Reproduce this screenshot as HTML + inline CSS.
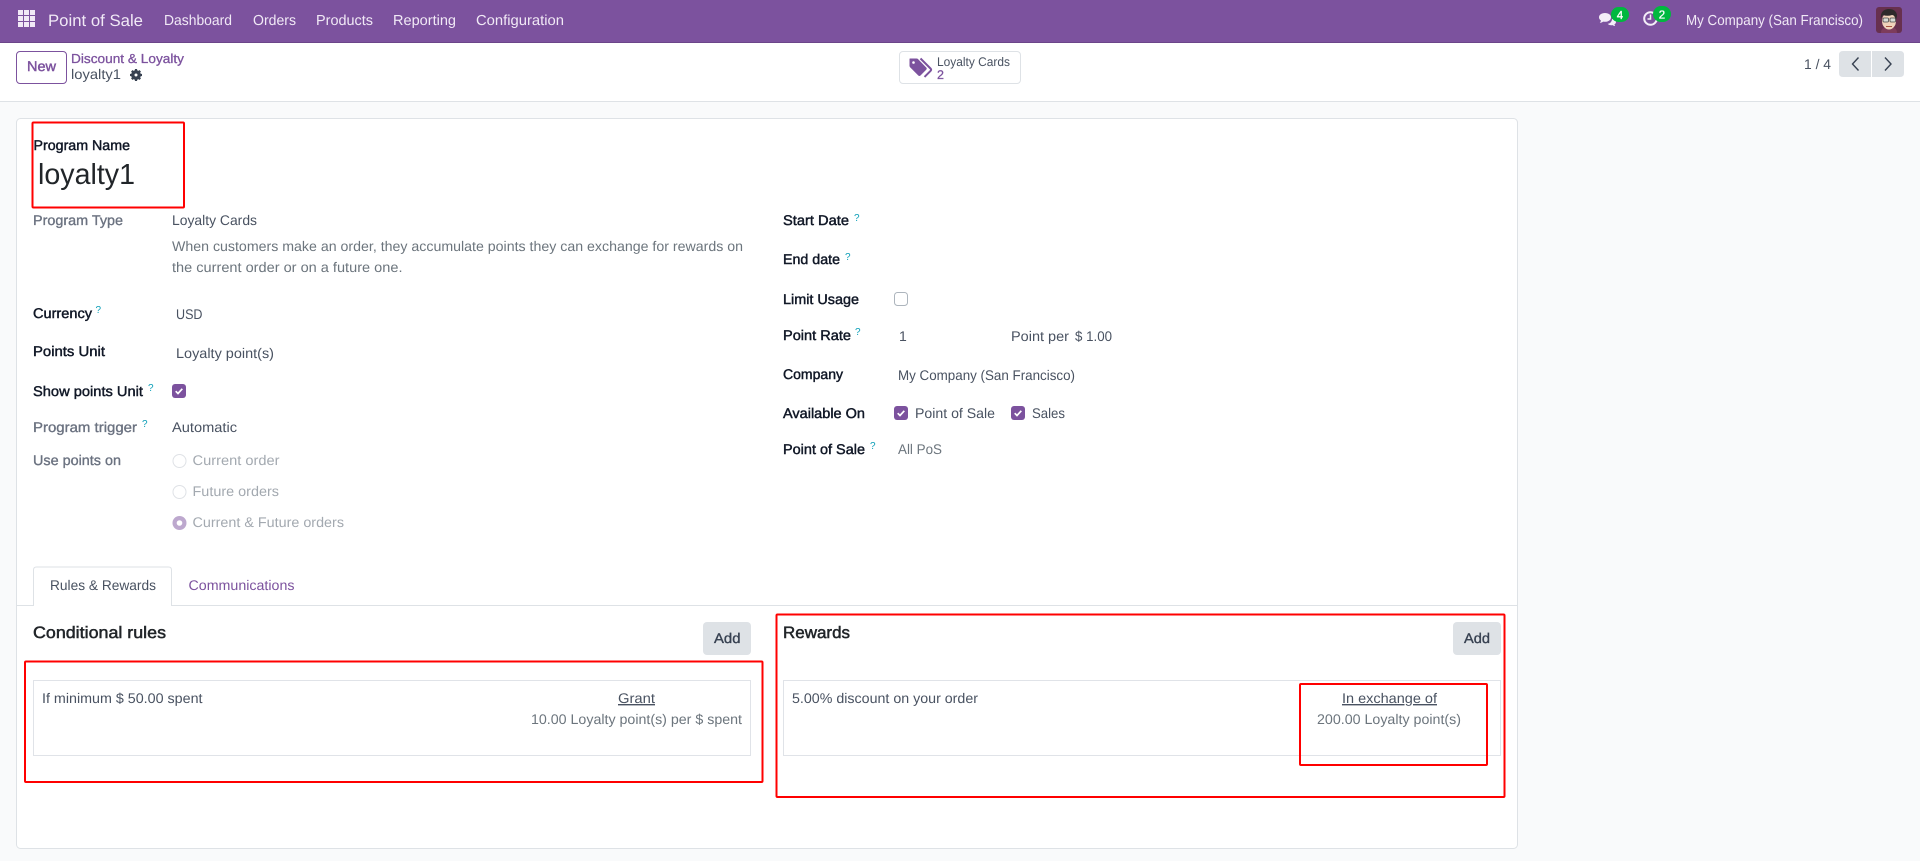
<!DOCTYPE html>
<html lang="en">
<head>
<meta charset="utf-8">
<title>Point of Sale - loyalty1</title>
<style>
html,body{margin:0;padding:0;width:1920px;height:861px;overflow:hidden;background:#f9fafb}
svg{display:block}
text{font-family:"Liberation Sans",sans-serif;font-size:14px;fill:#4b5563;text-rendering:geometricPrecision}
.nav{fill:#f1e9f6;font-size:14.5px}
.dk{fill:#495261}
.gr{fill:#6c757d}
.lb{fill:#111827;stroke:#111827;stroke-width:.45px}
.lg{fill:#6b7280;stroke:#6b7280;stroke-width:.35px}
.pu{fill:#7c529e}
.dis{fill:#a3a9b0}
.q{fill:#0d9fb8;font-size:10px}
.u{text-decoration:underline}
.h{fill:#212529;stroke:#212529;stroke-width:.5px;font-size:16.5px}
.red{fill:none;stroke:#f00;stroke-width:2}
</style>
</head>
<body>
<svg width="1920" height="861" viewBox="0 0 1920 861" xmlns="http://www.w3.org/2000/svg">
<!-- navbar -->
<rect width="1920" height="43" fill="#7c529e"/>
<rect y="42" width="1920" height="1" fill="#6b4589"/>
<g fill="#f1e9f6">
<rect x="18" y="10" width="5" height="5"/><rect x="24" y="10" width="5" height="5"/><rect x="30" y="10" width="5" height="5"/>
<rect x="18" y="16" width="5" height="5"/><rect x="24" y="16" width="5" height="5"/><rect x="30" y="16" width="5" height="5"/>
<rect x="18" y="22" width="5" height="5"/><rect x="24" y="22" width="5" height="5"/><rect x="30" y="22" width="5" height="5"/>
</g>
<text class="nav" x="48" y="26" textLength="95" lengthAdjust="spacingAndGlyphs" style="font-size:16.5px">Point of Sale</text>
<text class="nav" x="164" y="25" textLength="68" lengthAdjust="spacingAndGlyphs">Dashboard</text>
<text class="nav" x="253" y="25" textLength="43" lengthAdjust="spacingAndGlyphs">Orders</text>
<text class="nav" x="316" y="25" textLength="57" lengthAdjust="spacingAndGlyphs">Products</text>
<text class="nav" x="393" y="25" textLength="63" lengthAdjust="spacingAndGlyphs">Reporting</text>
<text class="nav" x="476" y="25" textLength="88" lengthAdjust="spacingAndGlyphs">Configuration</text>
<!-- chat icon -->
<path d="M1605 13c3.600 0 6 1.900 6 4.400s-2.400 4.400-6 4.400c-.7 0-1.300-.1-1.900-.2-.9.7-2 1.100-3.300 1.200.6-.7 1-1.400 1.200-2.200-1.300-.8-2-1.900-2-3.200 0-2.500 2.400-4.400 6-4.400z" fill="#f4eef8"/>
<path d="M1612 19c2.400.3 4 1.400 4 3 0 1-.6 1.800-1.600 2.400.1.600.4 1.100.8 1.600-1 0-1.900-.4-2.600-.9-.4.100-.9.100-1.400.1-1.500 0-2.800-.5-3.500-1.300 2.600-.4 4.300-2.400 4.300-4.900z" fill="#f4eef8"/>
<rect x="1611" y="7" width="18" height="15" rx="7.500" fill="#00b83f"/>
<text x="1620" y="19" text-anchor="middle" style="font-size:11.500px;fill:#fff;stroke:#fff;stroke-width:.3px">4</text>
<!-- activity icon -->
<circle cx="1650.500" cy="18.500" r="6.300" fill="none" stroke="#f4eef8" stroke-width="2"/>
<path d="M1650.500 14.500v4.500h-3" fill="none" stroke="#f4eef8" stroke-width="1.500"/>
<rect x="1653" y="6" width="18" height="16" rx="8" fill="#00b83f"/>
<text x="1662" y="18.500" text-anchor="middle" style="font-size:11.500px;fill:#fff;stroke:#fff;stroke-width:.3px">2</text>
<text class="nav" x="1686" y="25" textLength="177" lengthAdjust="spacingAndGlyphs">My Company (San Francisco)</text>
<!-- avatar -->
<rect x="1876" y="7" width="26" height="26" rx="3" fill="#67304f"/>
<path d="M1881 33c0-4 2-6 8-6s8 2 8 6z" fill="#7d3c5c"/>
<ellipse cx="1889" cy="21" rx="7" ry="8.500" fill="#f1d3bb"/>
<path d="M1881 19c-1-7 3-10 8-10 4 0 8 2 8 7l-1 4c-1-3-2-5-4-5-3 1-6 1-9 0-1 1-1 2-2 4z" fill="#2e2a2b"/>
<rect x="1883" y="18" width="5.500" height="4" rx="1" fill="#d9dcd6" stroke="#4a4a4a" stroke-width=".8"/>
<rect x="1890" y="18" width="5.500" height="4" rx="1" fill="#d9dcd6" stroke="#4a4a4a" stroke-width=".8"/>
<path d="M1886 26.500h6" stroke="#a8553f" stroke-width="1"/>
<!-- control panel -->
<rect y="43" width="1920" height="58" fill="#fff"/>
<rect y="101" width="1920" height="1" fill="#dee2e6"/>
<rect x="16.500" y="51.500" width="50" height="32" rx="3.500" fill="#fff" stroke="#7c529e"/>
<text class="pu" x="27" y="71" textLength="29" lengthAdjust="spacingAndGlyphs" style="stroke:#7c529e;stroke-width:.45px">New</text>
<text class="pu" x="71" y="63" textLength="113" lengthAdjust="spacingAndGlyphs" style="font-size:13px;stroke:#7c529e;stroke-width:.3px">Discount &amp; Loyalty</text>
<text class="dk" x="71" y="79" textLength="50" lengthAdjust="spacingAndGlyphs">loyalty1</text>
<g transform="translate(136 75)">
<circle r="3.200" fill="none" stroke="#374151" stroke-width="3.400"/>
<path stroke="#374151" stroke-width="2.200" d="M0-6v2M0 4v2M-6 0h2M4 0h2M-4.200-4.200l1.400 1.400M2.800 2.800l1.400 1.400M4.200-4.200l-1.400 1.400M-2.800 2.800l-1.400 1.400"/>
</g>
<rect x="899.500" y="51.500" width="121" height="32" rx="3.500" fill="#fff" stroke="#dee2e6"/>
<path d="M910 58.500h6.500q1 0 1.700.7l8 8.300q1.100 1.100 0 2.200l-5.700 5.800q-1.100 1.100-2.200 0l-8.100-8.100q-.7-.7-.7-1.700v-6.700q0-.5.500-.5z" fill="#7c529e"/>
<circle cx="913.500" cy="62.500" r="1.300" fill="#fff"/>
<path d="M920.500 58.500l10 10q1.200 1.200 0 2.400l-6 6" fill="none" stroke="#7c529e" stroke-width="2"/>
<text class="dk" x="937" y="66" textLength="73" lengthAdjust="spacingAndGlyphs" style="font-size:12.500px">Loyalty Cards</text>
<text class="pu" x="937" y="79" style="font-size:12.500px;stroke:#7c529e;stroke-width:.3px">2</text>
<text class="dk" x="1804" y="69" textLength="27" lengthAdjust="spacingAndGlyphs">1 / 4</text>
<path d="M1843 51h28v26h-28q-4 0-4-4v-18q0-4 4-4z" fill="#dee2e6"/>
<path d="M1872 51h28q4 0 4 4v18q0 4-4 4h-28z" fill="#dee2e6"/>
<path d="M1858.500 57.500l-6 6.500 6 6.500M1885 57.500l6 6.500-6 6.500" fill="none" stroke="#374151" stroke-width="1.400"/>
<!-- card -->
<rect x="16.500" y="118.500" width="1501" height="730" rx="4" fill="#fff" stroke="#dee2e6"/>
<rect class="red" x="32.500" y="122.500" width="151.500" height="85" rx="1"/>
<text class="lb" x="33.500" y="150" textLength="96.500" lengthAdjust="spacingAndGlyphs">Program Name</text>
<text x="38" y="184" textLength="97" lengthAdjust="spacingAndGlyphs" style="font-size:29px;fill:#212529">loyalty1</text>
<!-- left column -->
<text class="lg" x="33" y="225" textLength="90" lengthAdjust="spacingAndGlyphs">Program Type</text>
<text class="dk" x="172" y="225" textLength="85" lengthAdjust="spacingAndGlyphs">Loyalty Cards</text>
<text class="gr" x="172" y="251" textLength="571" lengthAdjust="spacingAndGlyphs">When customers make an order, they accumulate points they can exchange for rewards on</text>
<text class="gr" x="172" y="272" textLength="230.500" lengthAdjust="spacingAndGlyphs">the current order or on a future one.</text>
<text class="lb" x="33" y="318" textLength="59" lengthAdjust="spacingAndGlyphs">Currency</text>
<text class="q" x="95.500" y="313">?</text>
<text class="dk" x="176" y="319" textLength="26.500" lengthAdjust="spacingAndGlyphs">USD</text>
<text class="lb" x="33" y="356" textLength="72" lengthAdjust="spacingAndGlyphs">Points Unit</text>
<text class="dk" x="176" y="358" textLength="98" lengthAdjust="spacingAndGlyphs">Loyalty point(s)</text>
<text class="lb" x="33" y="396" textLength="110" lengthAdjust="spacingAndGlyphs">Show points Unit</text>
<text class="q" x="148" y="391">?</text>
<rect x="172" y="384" width="14" height="14" rx="3" fill="#7c529e"/>
<path d="M175.700 391.200l2.300 2.300 4.300-4.700" fill="none" stroke="#fff" stroke-width="1.700"/>
<text class="lg" x="33" y="432" textLength="104" lengthAdjust="spacingAndGlyphs">Program trigger</text>
<text class="q" x="142" y="427">?</text>
<text class="dk" x="172" y="432" textLength="65" lengthAdjust="spacingAndGlyphs">Automatic</text>
<text class="lg" x="33" y="465" textLength="88" lengthAdjust="spacingAndGlyphs">Use points on</text>
<circle cx="179.500" cy="461" r="6.500" fill="#fff" stroke="#dfe2e6"/>
<text class="dis" x="192.500" y="465" textLength="87" lengthAdjust="spacingAndGlyphs">Current order</text>
<circle cx="179.500" cy="492" r="6.500" fill="#fff" stroke="#dfe2e6"/>
<text class="dis" x="192.500" y="496" textLength="86.500" lengthAdjust="spacingAndGlyphs">Future orders</text>
<circle cx="179.500" cy="523" r="7" fill="#bda8ce"/>
<circle cx="179.500" cy="523" r="2.800" fill="#fff"/>
<text class="dis" x="192.500" y="527" textLength="151.500" lengthAdjust="spacingAndGlyphs">Current &amp; Future orders</text>
<!-- right column -->
<text class="lb" x="783" y="225" textLength="66" lengthAdjust="spacingAndGlyphs">Start Date</text>
<text class="q" x="854" y="221">?</text>
<text class="lb" x="783" y="264" textLength="57" lengthAdjust="spacingAndGlyphs">End date</text>
<text class="q" x="845" y="260">?</text>
<text class="lb" x="783" y="304" textLength="76" lengthAdjust="spacingAndGlyphs">Limit Usage</text>
<rect x="894.500" y="292.500" width="13" height="13" rx="3" fill="#fff" stroke="#adb5bd"/>
<text class="lb" x="783" y="340" textLength="68" lengthAdjust="spacingAndGlyphs">Point Rate</text>
<text class="q" x="855" y="335">?</text>
<text class="dk" x="899" y="341">1</text>
<text class="dk" x="1011" y="341" textLength="58" lengthAdjust="spacingAndGlyphs">Point per</text>
<text class="dk" x="1075" y="341" textLength="37" lengthAdjust="spacingAndGlyphs">$ 1.00</text>
<text class="lb" x="783" y="379" textLength="60" lengthAdjust="spacingAndGlyphs">Company</text>
<text class="dk" x="898" y="380" textLength="177" lengthAdjust="spacingAndGlyphs">My Company (San Francisco)</text>
<text class="lb" x="783" y="418" textLength="82" lengthAdjust="spacingAndGlyphs">Available On</text>
<rect x="894" y="406" width="14" height="14" rx="3" fill="#7c529e"/>
<path d="M897.700 413.200l2.300 2.300 4.300-4.700" fill="none" stroke="#fff" stroke-width="1.700"/>
<text class="dk" x="915" y="418" textLength="80" lengthAdjust="spacingAndGlyphs">Point of Sale</text>
<rect x="1011" y="406" width="14" height="14" rx="3" fill="#7c529e"/>
<path d="M1014.700 413.200l2.300 2.300 4.300-4.700" fill="none" stroke="#fff" stroke-width="1.700"/>
<text class="dk" x="1032" y="418" textLength="33" lengthAdjust="spacingAndGlyphs">Sales</text>
<text class="lb" x="783" y="454" textLength="82" lengthAdjust="spacingAndGlyphs">Point of Sale</text>
<text class="q" x="870" y="449">?</text>
<text class="gr" x="898" y="454" textLength="44" lengthAdjust="spacingAndGlyphs">All PoS</text>
<!-- tabs -->
<rect x="17" y="605" width="1500" height="1" fill="#dee2e6"/>
<path d="M33.500 606v-36q0-3 3-3h132q3 0 3 3v36" fill="#fff" stroke="#dee2e6"/>
<rect x="34" y="605" width="137" height="2" fill="#fff"/>
<text class="dk" x="50" y="590" textLength="106" lengthAdjust="spacingAndGlyphs">Rules &amp; Rewards</text>
<text class="pu" x="188.500" y="590" textLength="106" lengthAdjust="spacingAndGlyphs">Communications</text>
<!-- conditional rules -->
<text class="h" x="33" y="638" textLength="133" lengthAdjust="spacingAndGlyphs">Conditional rules</text>
<rect x="703" y="622" width="48" height="33" rx="4" fill="#dee2e6"/>
<text class="dk" x="714" y="643" textLength="26.500" lengthAdjust="spacingAndGlyphs" style="fill:#374151;stroke:#374151;stroke-width:.35px">Add</text>
<rect class="red" x="25" y="661.500" width="737.500" height="120.500" rx="1"/>
<rect x="33.500" y="680.500" width="717" height="75" fill="#fff" stroke="#e0e3e8"/>
<text class="dk" x="42" y="703" textLength="160.500" lengthAdjust="spacingAndGlyphs">If minimum $ 50.00 spent</text>
<text class="dk u" x="618" y="703" textLength="37" lengthAdjust="spacingAndGlyphs">Grant</text>
<text class="gr" x="531" y="724" textLength="211" lengthAdjust="spacingAndGlyphs">10.00 Loyalty point(s) per $ spent</text>
<!-- rewards -->
<rect class="red" x="776.500" y="614.500" width="728" height="182.500" rx="1"/>
<text class="h" x="783" y="638" textLength="67" lengthAdjust="spacingAndGlyphs">Rewards</text>
<rect x="1453" y="622" width="48" height="33" rx="4" fill="#dee2e6"/>
<text class="dk" x="1464" y="643" textLength="26" lengthAdjust="spacingAndGlyphs" style="fill:#374151;stroke:#374151;stroke-width:.35px">Add</text>
<rect x="783.500" y="680.500" width="717" height="75" fill="#fff" stroke="#e0e3e8"/>
<text class="dk" x="792" y="703" textLength="186" lengthAdjust="spacingAndGlyphs">5.00% discount on your order</text>
<text class="dk u" x="1342" y="703" textLength="95" lengthAdjust="spacingAndGlyphs">In exchange of</text>
<text class="gr" x="1317" y="724" textLength="144" lengthAdjust="spacingAndGlyphs">200.00 Loyalty point(s)</text>
<rect class="red" x="1300" y="684" width="187" height="81" rx="1"/>
</svg>
</body>
</html>
